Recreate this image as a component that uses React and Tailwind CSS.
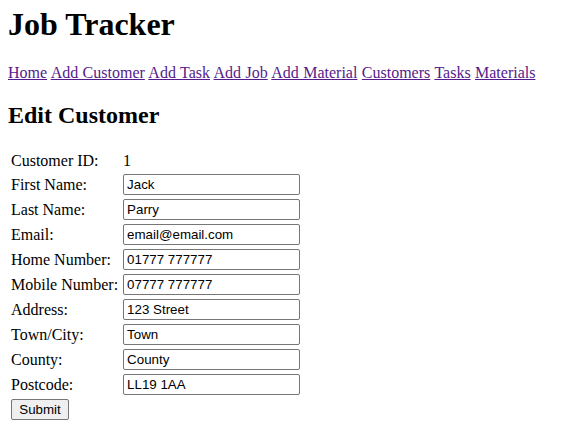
const links = ['Home', 'Add Customer', 'Add Task', 'Add Job', 'Add Material', 'Customers', 'Tasks', 'Materials'];

const fields = [
  { label: 'First Name:', value: 'Jack' },
  { label: 'Last Name:', value: 'Parry' },
  { label: 'Email:', value: 'email@email.com' },
  { label: 'Home Number:', value: '01777 777777' },
  { label: 'Mobile Number:', value: '07777 777777' },
  { label: 'Address:', value: '123 Street' },
  { label: 'Town/City:', value: 'Town' },
  { label: 'County:', value: 'County' },
  { label: 'Postcode:', value: 'LL19 1AA' },
];

export default function App() {
  return (
    <div className="min-h-[448px] bg-white px-[8px] pt-px text-[16px] leading-[normal] text-black font-['Liberation_Serif','Times_New_Roman',serif]">
      <h1 className="mt-[5px] mb-[21.44px] text-[32px] font-bold">Job Tracker</h1>

      {/* Nav */}
      <p className="my-0 [word-spacing:0.4px]">
        {links.map((l, i) => (
          <span key={l}>
            <a href="#" className="text-[#551a8b] underline">{l}</a>
            {i < links.length - 1 && ' '}
          </span>
        ))}
      </p>

      <h2 className="my-[19.92px] text-[24px] font-bold">Edit Customer</h2>

      <form onSubmit={(e) => e.preventDefault()}>
        <table className="border-separate border-spacing-[2px]">
          <tbody>
            <tr>
              <td className="py-px pl-px pr-[2px]">Customer ID:</td>
              <td className="p-px">1</td>
            </tr>
            {fields.map((f) => (
              <tr key={f.label}>
                <td className="py-px pl-px pr-[2px]">{f.label}</td>
                <td className="p-px">
                  <input
                    type="text"
                    defaultValue={f.value}
                    className="block h-[21px] w-[177px] rounded-[2px] border border-[#767676] bg-white px-[3px] text-[13.33px] text-black font-['Liberation_Sans',Arial,sans-serif]"
                  />
                </td>
              </tr>
            ))}
            <tr>
              <td className="p-px">
                <button
                  type="submit"
                  className="block h-[21px] w-[58px] rounded-[2px] border border-[#767676] bg-[#efefef] text-center text-[13.33px] text-black font-['Liberation_Sans',Arial,sans-serif]"
                >
                  Submit
                </button>
              </td>
            </tr>
          </tbody>
        </table>
      </form>
    </div>
  );
}
